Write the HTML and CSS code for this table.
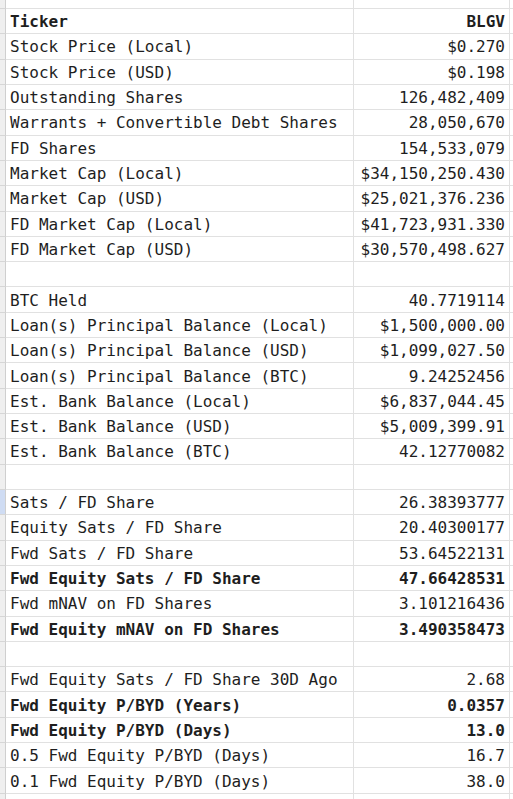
FILE: index.html
```html
<!DOCTYPE html>
<html>
<head>
<meta charset="utf-8">
<link rel="stylesheet" href="styles.css">
</head>
<body>
<div class="sheet">
  <div class="g top"></div><div class="c top"></div><div class="c top"></div><div class="c x top"></div>

  <div class="g"></div><div class="c b">Ticker</div><div class="c v b">BLGV</div><div class="c x"></div>
  <div class="g"></div><div class="c">Stock Price (Local)</div><div class="c v">$0.270</div><div class="c x"></div>
  <div class="g"></div><div class="c">Stock Price (USD)</div><div class="c v">$0.198</div><div class="c x"></div>
  <div class="g"></div><div class="c">Outstanding Shares</div><div class="c v">126,482,409</div><div class="c x"></div>
  <div class="g"></div><div class="c">Warrants + Convertible Debt Shares</div><div class="c v">28,050,670</div><div class="c x"></div>
  <div class="g"></div><div class="c">FD Shares</div><div class="c v">154,533,079</div><div class="c x"></div>
  <div class="g"></div><div class="c">Market Cap (Local)</div><div class="c v">$34,150,250.430</div><div class="c x"></div>
  <div class="g"></div><div class="c">Market Cap (USD)</div><div class="c v">$25,021,376.236</div><div class="c x"></div>
  <div class="g"></div><div class="c">FD Market Cap (Local)</div><div class="c v">$41,723,931.330</div><div class="c x"></div>
  <div class="g"></div><div class="c">FD Market Cap (USD)</div><div class="c v">$30,570,498.627</div><div class="c x"></div>
  <div class="g"></div><div class="c"></div><div class="c v"></div><div class="c x"></div>

  <div class="g"></div><div class="c">BTC Held</div><div class="c v">40.7719114</div><div class="c x"></div>
  <div class="g"></div><div class="c">Loan(s) Principal Balance (Local)</div><div class="c v">$1,500,000.00</div><div class="c x"></div>
  <div class="g"></div><div class="c">Loan(s) Principal Balance (USD)</div><div class="c v">$1,099,027.50</div><div class="c x"></div>
  <div class="g"></div><div class="c">Loan(s) Principal Balance (BTC)</div><div class="c v">9.24252456</div><div class="c x"></div>
  <div class="g"></div><div class="c">Est. Bank Balance (Local)</div><div class="c v">$6,837,044.45</div><div class="c x"></div>
  <div class="g"></div><div class="c">Est. Bank Balance (USD)</div><div class="c v">$5,009,399.91</div><div class="c x"></div>
  <div class="g"></div><div class="c">Est. Bank Balance (BTC)</div><div class="c v">42.12770082</div><div class="c x"></div>
  <div class="g"></div><div class="c"></div><div class="c v"></div><div class="c x"></div>

  <div class="g sel"></div><div class="c">Sats / FD Share</div><div class="c v">26.38393777</div><div class="c x"></div>
  <div class="g"></div><div class="c">Equity Sats / FD Share</div><div class="c v">20.40300177</div><div class="c x"></div>
  <div class="g"></div><div class="c">Fwd Sats / FD Share</div><div class="c v">53.64522131</div><div class="c x"></div>
  <div class="g"></div><div class="c b">Fwd Equity Sats / FD Share</div><div class="c v b">47.66428531</div><div class="c x"></div>
  <div class="g"></div><div class="c">Fwd mNAV on FD Shares</div><div class="c v">3.101216436</div><div class="c x"></div>
  <div class="g"></div><div class="c b">Fwd Equity mNAV on FD Shares</div><div class="c v b">3.490358473</div><div class="c x"></div>
  <div class="g"></div><div class="c"></div><div class="c v"></div><div class="c x"></div>

  <div class="g"></div><div class="c">Fwd Equity Sats / FD Share 30D Ago</div><div class="c v">2.68</div><div class="c x"></div>
  <div class="g"></div><div class="c b">Fwd Equity P/BYD (Years)</div><div class="c v b">0.0357</div><div class="c x"></div>
  <div class="g"></div><div class="c b">Fwd Equity P/BYD (Days)</div><div class="c v b">13.0</div><div class="c x"></div>
  <div class="g"></div><div class="c">0.5 Fwd Equity P/BYD (Days)</div><div class="c v">16.7</div><div class="c x"></div>
  <div class="g"></div><div class="c">0.1 Fwd Equity P/BYD (Days)</div><div class="c v">38.0</div><div class="c x"></div>
  <div class="g"></div><div class="c"></div><div class="c v"></div><div class="c x"></div>
</div>
</body>
</html>
```
FILE: styles.css
```css
html, body {
  margin: 0;
  padding: 0;
  background: #ffffff;
}
.sheet {
  display: grid;
  grid-template-columns: 6px 348px 156px 1fr;
  grid-template-rows: 9px;
  grid-auto-rows: 25.32px;
  font-family: "DejaVu Sans Mono", "Liberation Mono", monospace;
  font-size: 16px;
  color: #1e1e1e;
  width: 513px;
  overflow: hidden;
}
.g, .c {
  box-sizing: border-box;
  border-bottom: 1px solid #e1e1e1;
  border-right: 1px solid #e1e1e1;
  white-space: nowrap;
  overflow: hidden;
}
.g {
  background: #efefef;
  border-right-color: #cfcfcf;
  border-bottom-color: #d6d6d6;
}
.g.sel {
  background: #cfdcf3;
}
.c {
  display: flex;
  align-items: center;
  padding: 1px 4px 0 4px;
}
.c.v {
  justify-content: flex-end;
}
.c.x {
  border-right: none;
}
.top {
  padding: 0;
}
.b {
  font-weight: bold;
}
```
